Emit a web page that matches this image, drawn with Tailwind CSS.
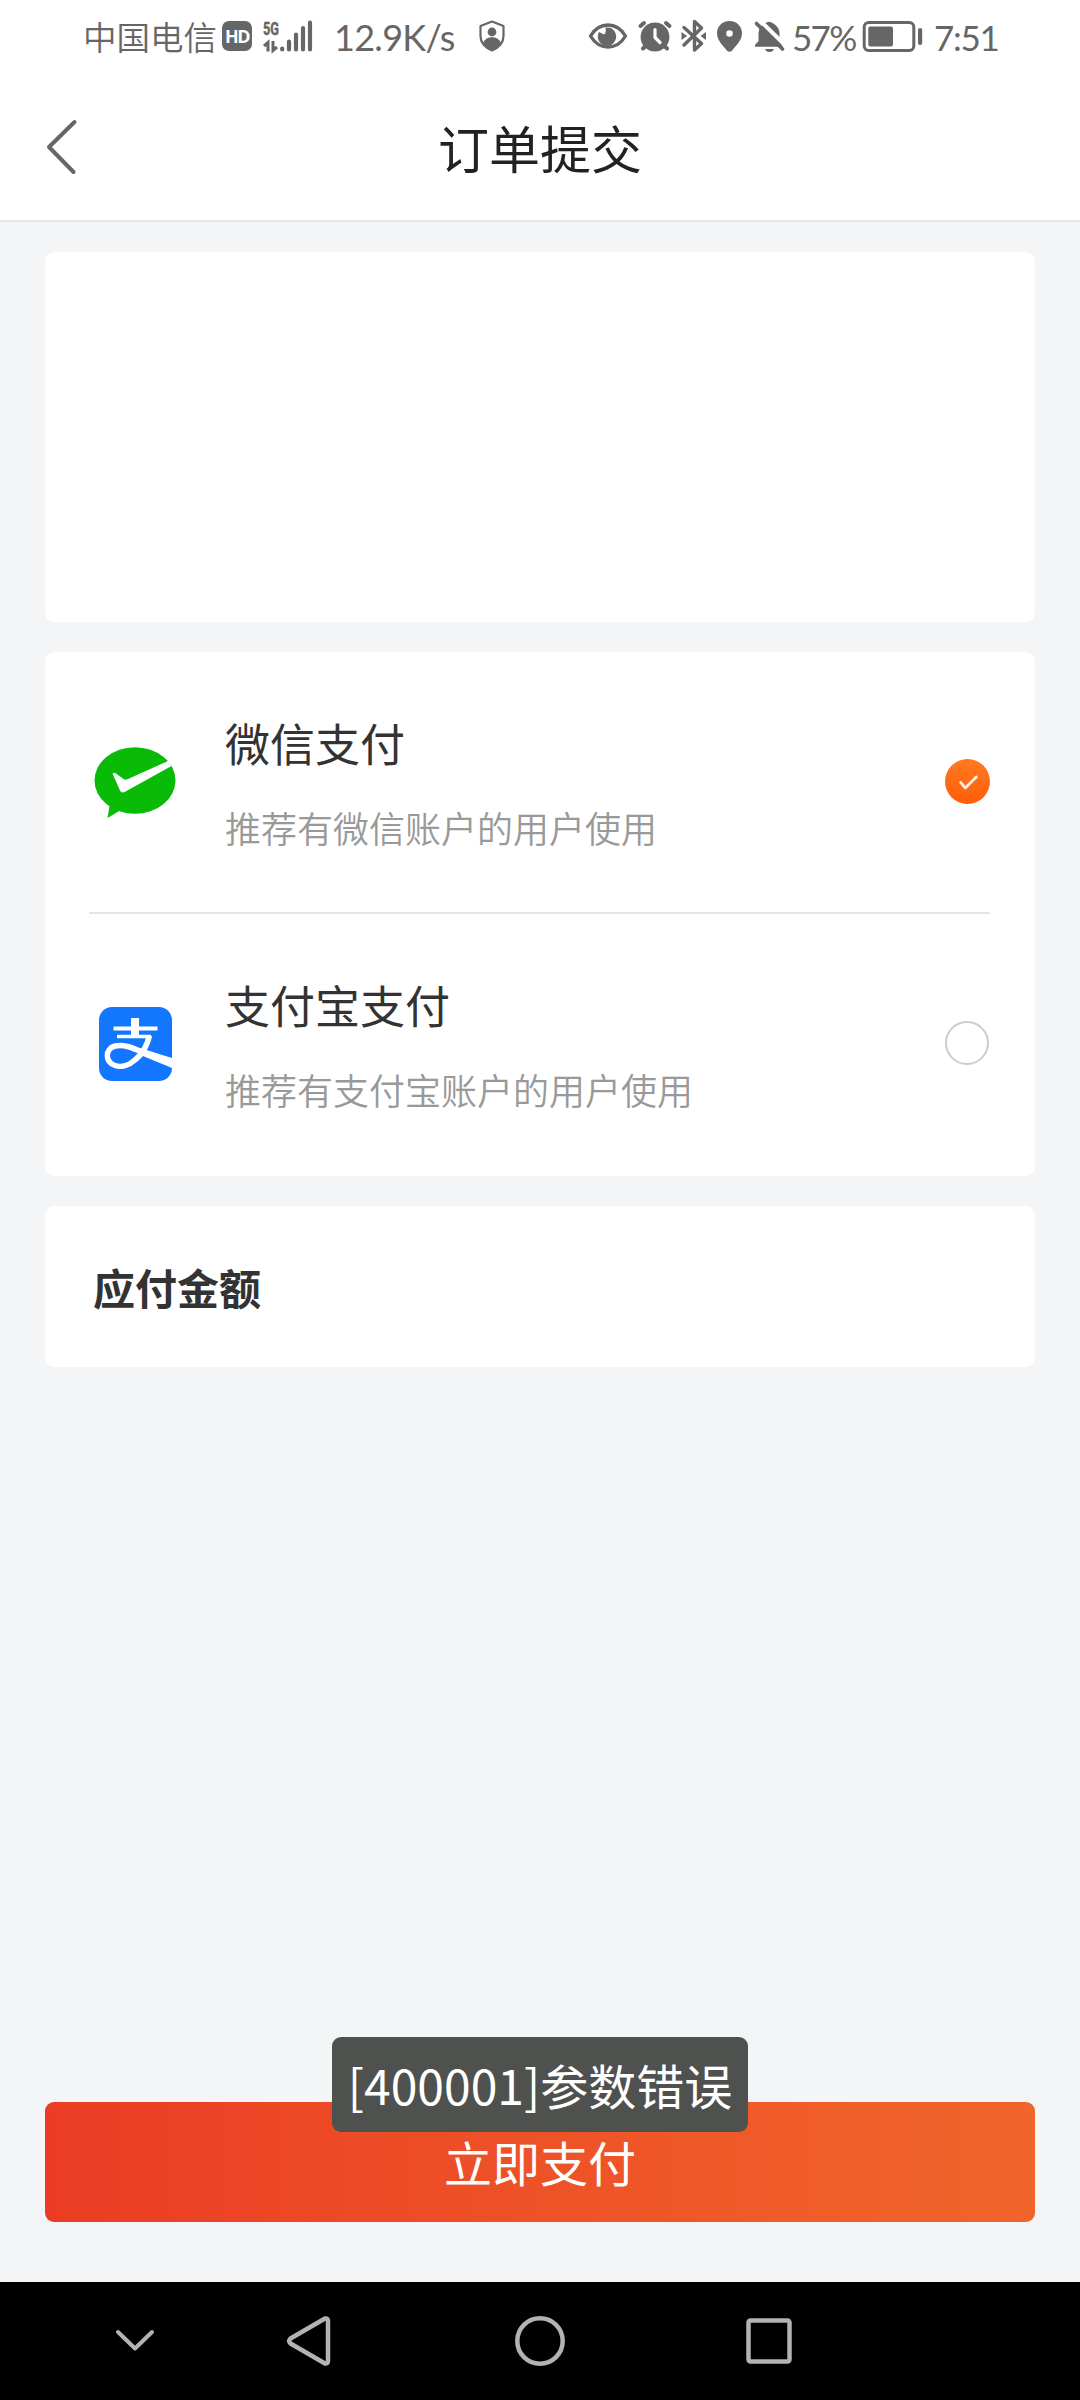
<!DOCTYPE html>
<html lang="zh-CN">
<head>
<meta charset="utf-8">
<title>订单提交</title>
<script src="https://cdn.jsdelivr.net/npm/@tailwindcss/browser@4"></script>
</head>
<body class="bg-[#f4f5f7]">
<div class="relative flex h-[2400px] w-[1080px] flex-col overflow-hidden bg-[#f4f5f7] font-['Noto_Sans_CJK_SC',sans-serif] text-[#333]">

  <!-- Status bar -->
  <div class="flex h-[72px] shrink-0 items-center bg-white pl-[83px] text-[#666]">
    <span class="w-[137px] whitespace-nowrap text-[33.5px] leading-[70px] font-[350]">中国电信</span>
    <span class="ml-[2px] flex h-[30px] w-[30px] items-center justify-center rounded-[7px] bg-[#666] font-['Open_Sans',sans-serif] text-[18px] leading-none font-bold tracking-[-1.500px] text-white">HD</span>
    <svg class="ml-[10px] h-[50px] w-[52px] shrink-0 overflow-visible" viewBox="262 11 52 50">
      <text x="263" y="34.500" textLength="16" lengthAdjust="spacingAndGlyphs" font-family="Roboto, sans-serif" font-size="19" font-weight="700" fill="#666" stroke="#666" stroke-width="0.500">5G</text>
      <path d="M264 46L268 42.500V51.500M273 41V50.500L277 47" fill="none" stroke="#666" stroke-width="3"/>
      <path d="M282.200 48.500V49.500M289 41.500V49.500M296 34.500V49.500M303 28V49.500M310 22.500V49.500" stroke="#666" stroke-width="4.200" stroke-linecap="round"/>
    </svg>
    <span class="ml-[20px] w-[123px] whitespace-nowrap pt-[1px] font-['Lato',sans-serif] text-[36px] leading-[72px] tracking-[-0.700px]">12.9K/s</span>
    <svg class="ml-[20px] h-[34px] w-[30px] shrink-0" viewBox="477 19 30 34" fill="#666">
      <path d="M492 21.500L503.500 26V36C503.500 43 499 47.500 492 50.500C485 47.500 480.500 43 480.500 36V26Z" fill="none" stroke="#666" stroke-width="2.200" stroke-linejoin="round"/>
      <circle cx="492" cy="32" r="4.400"/>
      <path d="M483 43C485 39 488 37.300 492 37.300S499 39 501 43C499 47 496 49.300 492 51C488 49.300 485 47 483 43Z"/>
    </svg>
    <svg class="ml-[81px] h-[36px] w-[200px] shrink-0" viewBox="588 18 200 36" fill="#666">
      <path d="M590.500 36C595 28.500 601 25 608 25S621 28.500 625.500 36C621 43.500 615 47 608 47S595 43.500 590.500 36Z" fill="none" stroke="#666" stroke-width="3.400" stroke-linejoin="round"/>
      <path d="M599 32L604 34.500Q606.500 33 605.500 27.500A9.200 9.200 0 1 1 599 32Z"/>
      <circle cx="655" cy="37" r="14.400"/>
      <path d="M640.500 26L644 23M669.500 26L666 23M643 48.500L646 45.500M667 48.500L664 45.500" stroke="#666" stroke-width="4" stroke-linecap="round"/>
      <path d="M655 29.500V37.500L660 42.500" fill="none" stroke="#fff" stroke-width="3.200" stroke-linecap="round" stroke-linejoin="round"/>
      <path d="M684 27.500L701.500 43.500L694.500 50V21.500L701.500 28L684 45" fill="none" stroke="#666" stroke-width="3.400" stroke-linecap="round" stroke-linejoin="round"/>
      <path d="M681.500 32L687 36L681.500 40ZM706 32L700.500 36L706 40Z"/>
      <path fill-rule="evenodd" d="M729.500 21C737 21 742 26.500 742 33.500C742 40 736.500 45 732 50.700Q729.500 53 727 50.700C722.500 45 717 40 717 33.500C717 26.500 722 21 729.500 21ZM729.500 30.200A3.300 3.300 0 1 0 729.500 36.800A3.300 3.300 0 1 0 729.500 30.200Z"/>
      <path d="M755 46.700V45L758.500 41V33Q758.500 27 765 23.300Q769 20 773 23.300Q779.500 27 779.500 34V41L783 46.700ZM765 49H774Q773 52 769.500 52Q766 52 765 49Z"/>
      <path d="M760 20.500L786 46" stroke="#fff" stroke-width="4"/>
      <path d="M756.500 23.500L782.500 49" stroke="#666" stroke-width="3.600" stroke-linecap="round"/>
    </svg>
    <span class="ml-[4px] w-[66px] whitespace-nowrap pt-[1px] font-['Lato',sans-serif] text-[35px] leading-[72px] tracking-[-1.700px]">57%</span>
    <svg class="ml-[4px] h-[36px] w-[62px] shrink-0" viewBox="862 18 62 36" fill="#666">
      <rect x="864.200" y="22.400" width="49.600" height="28.200" rx="4.500" fill="none" stroke="#666" stroke-width="3"/>
      <rect x="868.300" y="26.500" width="24.700" height="20" rx="2"/>
      <rect x="918" y="28" width="4.200" height="17" rx="2"/>
    </svg>
    <span class="ml-[10px] whitespace-nowrap pt-[1px] font-['Lato',sans-serif] text-[35px] leading-[72px] tracking-[-1.300px]">7:51</span>
  </div>

  <!-- Title bar -->
  <header class="grid h-[150px] shrink-0 grid-cols-[200px_1fr_200px] items-center border-b-2 border-[#e5e5e5] bg-white">
    <svg class="mt-[2px] ml-[43px] h-[60px] w-[40px]" viewBox="44 117 40 60"><path d="M75.500 122L50 147L74.500 172" fill="none" stroke="#666" stroke-width="4" stroke-linecap="round" stroke-linejoin="round"/></svg>
    <h1 class="pt-[2px] text-center text-[51px] leading-[146px] text-[#222]">订单提交</h1>
  </header>

  <main class="flex flex-col gap-[30px] px-[45px] pt-[30px]">
    <section class="h-[370px] rounded-[9px] bg-white"></section>

    <!-- Payment methods -->
    <section class="h-[524px] rounded-[9px] bg-white px-[45px]">
      <div class="-ml-px flex h-[262px] border-b-2 border-[#e5e5e5] pl-px">
        <svg class="mt-[85px] h-[90px] w-[90px] shrink-0" viewBox="90 736 90 90">
          <ellipse cx="135" cy="779.500" rx="40.500" ry="33.300" fill="#09bb07"/>
          <path d="M110 802L107.500 817L121 809Z" fill="#09bb07"/>
          <path d="M112.500 772.500Q113.500 771 116 772.500L123.500 778Q125.500 779 128 778L168 760L171.500 765L125.500 790.500Q121.500 793 120 789.500Z" fill="#fff"/>
        </svg>
        <div class="ml-[45px] flex flex-1 flex-col pt-[57px]">
          <h2 class="text-[45px] leading-[68px]">微信支付</h2>
          <p class="mt-[23px] text-[36px] leading-[54px] font-[350] text-[#999]">推荐有微信账户的用户使用</p>
        </div>
        <div class="mt-[107px] flex size-[45px] items-center justify-center rounded-full bg-linear-to-b from-[#ff7a1f] to-[#ff5c0a]">
          <svg class="size-[22px]" viewBox="0 0 24 24"><path d="M4 12.500L9 18.500L21 6.500" fill="none" stroke="#fff1e6" stroke-width="3" stroke-linecap="round" stroke-linejoin="round"/></svg>
        </div>
      </div>
      <div class="flex h-[262px]">
        <svg class="mt-[85px] h-[90px] w-[90px] shrink-0" viewBox="90 999 90 90">
          <rect x="99" y="1007" width="73" height="74" rx="13" fill="#1277fe"/>
          <g fill="none" stroke="#fff">
            <path d="M113.500 1028.500H157.500" stroke-width="4"/>
            <path d="M135 1018V1036" stroke-width="8"/>
            <path d="M117 1036.500H151" stroke-width="3.500"/>
            <path d="M149.500 1035.500C147 1046 141 1055 135.500 1059.500C129 1065.500 121 1067.500 115 1065.500C105 1062 104.500 1049 115 1046C125 1043.500 136 1049.500 145 1053.500" stroke-width="5.500"/>
          </g>
          <path d="M140 1048L172 1058V1068L138 1054Z" fill="#fff"/>
        </svg>
        <div class="ml-[45px] flex flex-1 flex-col pt-[57px]">
          <h2 class="text-[45px] leading-[68px]">支付宝支付</h2>
          <p class="mt-[23px] text-[36px] leading-[54px] font-[350] text-[#999]">推荐有支付宝账户的用户使用</p>
        </div>
        <div class="mt-[107px] mr-[1px] size-[44px] rounded-full border-2 border-[#ccc]"></div>
      </div>
    </section>

    <section class="flex h-[161px] items-center rounded-[9px] bg-white px-[48px]">
      <h2 class="text-[42px] leading-[60px] font-bold">应付金额</h2>
    </section>
  </main>

  <button class="mx-[45px] mt-auto mb-[60px] h-[120px] shrink-0 rounded-[9px] bg-linear-to-r from-[#eb3b24] to-[#f0652b] pb-[3px] text-[48px] leading-[116px] text-white">立即支付</button>

  <!-- Navigation bar -->
  <nav class="flex h-[118px] shrink-0 items-center bg-black pl-[110px]">
    <svg class="h-[60px] w-[50px]" viewBox="110 2311 50 60" fill="none" stroke="#b3b3b3" stroke-width="4" stroke-linecap="round" stroke-linejoin="round"><path d="M118 2332L135 2348.500L152 2332"/></svg>
    <svg class="ml-[120px] h-[60px] w-[60px]" viewBox="280 2311 60 60" fill="none" stroke="#b3b3b3" stroke-width="4.500" stroke-linejoin="round"><path d="M290.500 2338.500Q288 2341 290.500 2343.500L325 2363.500Q328 2364 328 2361V2321Q328 2318 325 2318.500Z"/></svg>
    <svg class="ml-[170px] h-[60px] w-[60px]" viewBox="510 2311 60 60" fill="none" stroke="#b3b3b3" stroke-width="4.500"><circle cx="540" cy="2341" r="22.700"/></svg>
    <svg class="ml-[170px] h-[60px] w-[60px]" viewBox="740 2311 60 60" fill="none" stroke="#b3b3b3" stroke-width="4.500"><rect x="748.500" y="2320.500" width="41" height="41" rx="2"/></svg>
  </nav>

  <!-- Toast -->
  <div class="absolute top-[2037px] left-[332px] flex h-[95px] w-[416px] items-center justify-center rounded-[9px] bg-[#4f514f] text-[48px] leading-[90px] whitespace-nowrap text-white"><span class="-mt-[2px]">[400001]参数错误</span></div>
</div>
</body>
</html>
